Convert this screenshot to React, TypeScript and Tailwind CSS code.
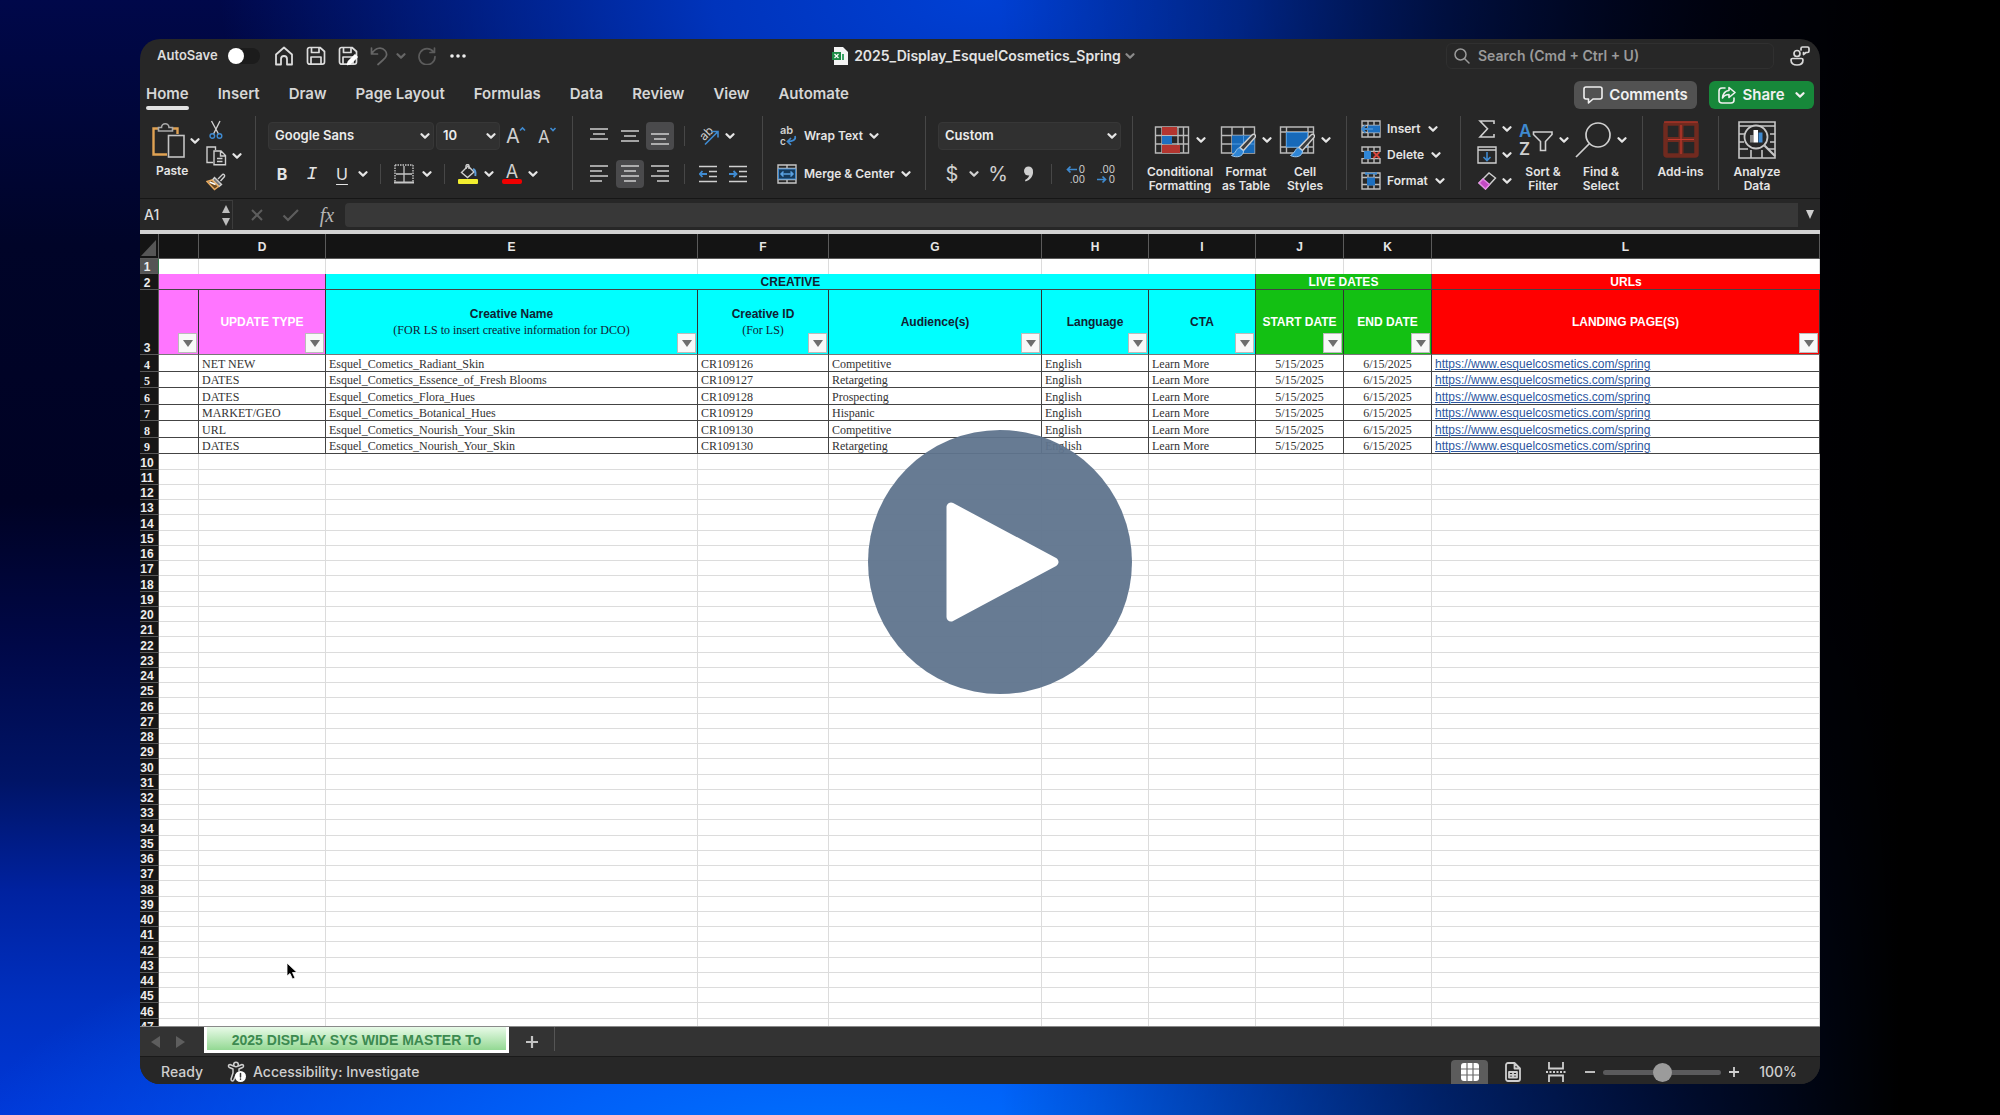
import type { ReactNode } from "react"

interface creative {
  type: string,
  name: string,
  id: string,
  audience: string,
}

const creatives: creative[] = [
  { type: "NET NEW", name: "Esquel_Cometics_Radiant_Skin", id: "CR109126", audience: "Competitive" },
  { type: "DATES", name: "Esquel_Cometics_Essence_of_Fresh Blooms", id: "CR109127", audience: "Retargeting" },
  { type: "DATES", name: "Esquel_Cometics_Flora_Hues", id: "CR109128", audience: "Prospecting" },
  { type: "MARKET/GEO", name: "Esquel_Cometics_Botanical_Hues", id: "CR109129", audience: "Hispanic" },
  { type: "URL", name: "Esquel_Cometics_Nourish_Your_Skin", id: "CR109130", audience: "Competitive" },
  { type: "DATES", name: "Esquel_Cometics_Nourish_Your_Skin", id: "CR109130", audience: "Retargeting" },
]

const tabs = ["Home", "Insert", "Draw", "Page Layout", "Formulas", "Data", "Review", "View", "Automate"]
const emptyRows = Array.from({ length: 38 }, (_, i) => i + 10)
const letters = ["", "D", "E", "F", "G", "H", "I", "J", "K", "L"]

/* ---------- small pieces ---------- */

function Chev({ className = "" }: { className?: string }) {
  return (
    <svg viewBox="0 0 10 6" className={`w-[10px] h-[6px] shrink-0 ${className}`} fill="none" stroke="currentColor" strokeWidth="2.2" strokeLinecap="round" strokeLinejoin="round">
      <path d="M1.5 1.2 5 4.6 8.5 1.2" />
    </svg>
  )
}

function Btn({ label, className = "", children }: { label: string, className?: string, children: ReactNode }) {
  return (
    <button aria-label={label} className={`flex items-center justify-center shrink-0 ${className}`}>
      {children}
    </button>
  )
}

function Group({ className, children }: { className: string, children: ReactNode }) {
  return <div className={`h-[74px] shrink-0 border-r border-[#474747] ${className}`}>{children}</div>
}

function Split({ className = "" }: { className?: string }) {
  return <span className={`w-px h-5 shrink-0 bg-[#474747] ${className}`} />
}

function Lines({ rows }: { rows: number[][] }) {
  return (
    <svg viewBox="0 0 18 18" className="w-[18px] h-[18px]" stroke="#cfcfcf" strokeWidth="1.6">
      {rows.map(([y, a, b]) => <path key={y} d={`M${a} ${y}H${b}`} />)}
    </svg>
  )
}

function Picker({ label, value, className }: { label: string, value: string, className: string }) {
  return (
    <label className={`relative h-7 shrink-0 ${className}`}>
      <select aria-label={label} className="appearance-none w-full h-7 px-[6px] rounded bg-[#303030] border border-[#373737] text-[13px] font-semibold text-[#ececec]">
        <option>{value}</option>
      </select>
      <Chev className="absolute right-1 top-[11px]" />
    </label>
  )
}

/* ---------- icons ---------- */

const stroke = { fill: "none", stroke: "currentColor", strokeLinecap: "round", strokeLinejoin: "round" } as const

function SaveIcon({ pen = false }: { pen?: boolean }) {
  return (
    <svg viewBox="0 0 20 20" className="w-5 h-5" {...stroke} strokeWidth="1.7">
      <path d="M3.5 1.5H14L18.5 5.5V16A2.2 2.2 0 0 1 16.3 18.2H3.7A2.2 2.2 0 0 1 1.5 16V3.5A2 2 0 0 1 3.5 1.5Z" />
      <path d="M5.5 1.8V6.5H13V1.8M5 18V11H15V18" />
      {pen && <path d="M9.5 18.5 10.5 15.5 17 9 19 11 12.5 17.5Z" fill="#fff" stroke="#fff" />}
    </svg>
  )
}

function PasteIcon() {
  return (
    <svg viewBox="0 0 34 37" className="w-[34px] h-[37px]" fill="none" strokeWidth="1.6">
      <path d="M7 6.5H1.5V32.5H15M20 6.5H25.5V12" stroke="#e0a253" strokeWidth="2.4" />
      <path d="M6.5 9V5.500H9.500A3.600 3.600 0 0 1 17 5.500H20.500V9Z" stroke="#a9a9a9" />
      <rect x="16.5" y="13.5" width="15.5" height="21.5" fill="#272727" stroke="#c4c4c4" />
    </svg>
  )
}

function CutIcon() {
  return (
    <svg viewBox="0 0 14 20" className="w-[14px] h-5" fill="none" strokeWidth="1.4">
      <path d="M2.5 1 9.5 14M11 1 4.5 14" stroke="#cfcfcf" />
      <circle cx="3.3" cy="16" r="2.3" stroke="#3f8ad0" />
      <circle cx="10.5" cy="16" r="2.3" stroke="#3f8ad0" />
    </svg>
  )
}

function CopyIcon() {
  return (
    <svg viewBox="0 0 21 20" className="w-[21px] h-5" fill="none" stroke="#cfcfcf" strokeWidth="1.4">
      <path d="M7 16.5H1V1H9.5V4" />
      <path d="M8 5H15L19.5 9.5V18.8H8ZM14.5 5V10H19.5M11 12.5H16.5M11 15.5H16.5" />
    </svg>
  )
}

function BrushIcon() {
  return (
    <svg viewBox="0 0 20 19" className="w-5 h-[19px]" fill="none" strokeWidth="1.4">
      <path d="M12 7 16.5 2.5A1.5 1.5 0 0 1 18.5 4.5L14.5 9" stroke="#cfcfcf" />
      <path d="M8.5 5.5 15.5 12.5 13 14.5 6.5 8Z" fill="#777" stroke="#cfcfcf" />
      <path d="M6 8 1 9.5 8.5 17.5 12.5 14.5Z" fill="#6b4a22" stroke="#e8ab60" />
      <path d="M3.5 10 9.5 12.5" stroke="#fff" />
    </svg>
  )
}

function BordersIcon() {
  return (
    <svg viewBox="0 0 20 20" className="w-5 h-5" fill="none" stroke="#c6c6c6">
      <path d="M1 1H19M1 1V18M19 1V18" strokeWidth="1.4" strokeDasharray="1.5 1" />
      <path d="M10 2V18M2 10H18" strokeWidth="1.3" />
      <path d="M0 18.5H20" strokeWidth="2" />
    </svg>
  )
}

function FillIcon() {
  return (
    <svg viewBox="0 0 20 20" className="w-5 h-5" fill="none" strokeWidth="1.4">
      <path d="M3.5 8.5 10 2 16 8 9.5 13.5Z" stroke="#cfcfcf" />
      <path d="M8 5V2A1.5 1.5 0 0 1 11 2V5" stroke="#cfcfcf" />
      <path d="M15 5C17.5 6 17.8 9 17.3 12" stroke="#5b9bd5" strokeWidth="2" />
      <rect x="0" y="15" width="20" height="5" rx="1" fill="#f2ee2f" />
    </svg>
  )
}

function OrientIcon() {
  return (
    <svg viewBox="0 0 20 20" className="w-5 h-5 overflow-visible" fill="none">
      <text x="1" y="13" fontSize="12" fill="#cfcfcf" fontFamily="Inter, sans-serif" transform="rotate(-45 6 9)">ab</text>
      <path d="M6 18.5 18.5 6M13 5.5H19V11.5" stroke="#3f8ad0" strokeWidth="1.6" />
    </svg>
  )
}

function IndentIcon({ right = false }: { right?: boolean }) {
  return (
    <svg viewBox="0 0 18 18" className="w-[18px] h-[18px]" fill="none">
      <path d="M0 1.5H18M10 6.5H18M10 11.5H18M0 16.5H18" stroke="#cfcfcf" strokeWidth="1.6" />
      {right
        ? <path d="M0 9H7M4.5 6 7.5 9 4.5 12" stroke="#3f8ad0" strokeWidth="1.8" />
        : <path d="M8 9H1M3.5 6 .8 9 3.5 12" stroke="#3f8ad0" strokeWidth="1.8" />}
    </svg>
  )
}

function WrapIcon() {
  return (
    <svg viewBox="0 0 18 20" className="w-[18px] h-5 overflow-visible" fill="none">
      <text x="1" y="8" fontSize="11" fill="#cfcfcf" fontFamily="Inter, sans-serif">ab</text>
      <text x="1" y="19" fontSize="10" fill="#cfcfcf" fontFamily="Inter, sans-serif">c</text>
      <path d="M16 10C17.5 14 13 15.5 9 15.5M12 12 8.5 15.5 12 18.8" stroke="#3f8ad0" strokeWidth="1.7" />
    </svg>
  )
}

function MergeIcon() {
  return (
    <svg viewBox="0 0 20 20" className="w-5 h-5" fill="none">
      <path d="M1 1H19V19H1ZM1 4.5H19M1 15.5H19M10 1V4.5M10 15.5V19" stroke="#c6c6c6" strokeWidth="1.4" />
      <rect x="1.5" y="5" width="17" height="10" fill="#16395a" stroke="#3f8ad0" />
      <path d="M4 10H16M6.5 7.5 4 10 6.5 12.5M13.5 7.5 16 10 13.5 12.5" stroke="#5aa0e0" strokeWidth="1.5" />
    </svg>
  )
}

function DecimalIcon({ top, bottom, right = false }: { top: string, bottom: string, right?: boolean }) {
  return (
    <svg viewBox="0 0 20 20" className="w-5 h-5 overflow-visible" fill="none">
      <text x="19" y="9" fontSize="10" textAnchor="end" fill="#cfcfcf" fontFamily="Inter, sans-serif">{top}</text>
      <text x="19" y="19" fontSize="10" textAnchor="end" fill="#cfcfcf" fontFamily="Inter, sans-serif">{bottom}</text>
      {right
        ? <path d="M1 15.5H9M6.5 12.5 9.5 15.5 6.5 18.5" stroke="#3f8ad0" strokeWidth="1.7" />
        : <path d="M11 5.500H2M4.500 2.500 1.500 5.500 4.500 8.500" stroke="#3f8ad0" strokeWidth="1.7" />}
    </svg>
  )
}

function ConditionalIcon() {
  return (
    <svg viewBox="0 0 36 36" className="w-9 h-9" fill="none">
      <path d="M1.5 5H34.5V31H1.5ZM1.5 13.5H34.5M1.5 22H34.5M8 5V31M24 5V31M29.5 5V31" stroke="#b9b9b9" strokeWidth="1.4" />
      <rect x="8" y="5" width="15" height="8" fill="#b3352f" />
      <rect x="8" y="14" width="10" height="8" fill="#1d6fbf" />
      <rect x="8" y="23" width="18" height="8" fill="#b3352f" />
    </svg>
  )
}

function BrushOver() {
  return (
    <>
      <path d="M34.5 12.5C36 13.5 35.5 15 34.5 16L23.5 28.5 20 25.5 31.5 13.5C32.5 12.5 33.5 12 34.5 12.5Z" fill="#3c3c3c" stroke="#d0d0d0" strokeWidth="1.4" />
      <path d="M19.5 26C16 26 16.5 31 11.5 33.5 16 36 23.5 35 23.5 29Z" fill="#2f86d6" stroke="#9cc8ef" />
    </>
  )
}

function TableFormatIcon() {
  return (
    <svg viewBox="0 0 36 36" className="w-9 h-9" fill="none">
      <path d="M1.5 5H34.5V31H1.5ZM1.5 13.5H34.5M1.5 22H34.5M12 5V31M23.5 5V31" stroke="#b9b9b9" strokeWidth="1.4" />
      <path d="M12 13.5H34.5V31H12Z" fill="#1769b8" />
      <path d="M12 22H34.5M23.5 13.5V31" stroke="#4f9be0" />
      <BrushOver />
    </svg>
  )
}

function CellStylesIcon() {
  return (
    <svg viewBox="0 0 36 36" className="w-9 h-9" fill="none">
      <path d="M1.5 5H34.5V31H1.5ZM1.5 10H34.5M1.5 25H34.5M7.5 5V31M29 5V31" stroke="#b9b9b9" strokeWidth="1.4" />
      <path d="M7.5 10.5H28.5V25H7.5Z" fill="#1769b8" stroke="#4f9be0" />
      <BrushOver />
    </svg>
  )
}

function CellsIcon({ kind }: { kind: string }) {
  return (
    <svg viewBox="0 0 20 18" className="w-5 h-[18px]" fill="none">
      <path d="M1 1H19V17H1ZM1 5.5H19M1 12.5H19M7 1V17M13 1V17" stroke="#bdbdbd" strokeWidth="1.4" />
      {kind === "Insert" && <>
        <rect x="7" y="5.5" width="12" height="7" fill="#1d6fbf" />
        <path d="M12 9H1M4.5 5.5 1 9 4.5 12.5" stroke="#3f8ad0" strokeWidth="1.8" />
      </>}
      {kind === "Delete" && <>
        <rect x="0" y="6" width="20" height="6" fill="#272727" />
        <rect x="3" y="5" width="7" height="8" rx="1" fill="#2f86d6" />
        <path d="M12.5 6 18.5 12M18.5 6 12.5 12" stroke="#d9463c" strokeWidth="1.8" />
      </>}
      {kind === "Format" && <>
        <rect x="6" y="5.5" width="8" height="8" fill="#1d6fbf" />
        <path d="M5 1.5H15M5 0V3M15 0V3" stroke="#3f8ad0" strokeWidth="1.5" />
      </>}
    </svg>
  )
}

function PeopleIcon() {
  return (
    <svg viewBox="0 0 20 20" className="w-5 h-5" {...stroke} strokeWidth="1.7">
      <circle cx="7" cy="7.5" r="3" />
      <path d="M2.500 12.500H11.500A1.500 1.500 0 0 1 13 14C13 17.500 10.500 19 7 19S1 17.500 1 14A1.500 1.500 0 0 1 2.500 12.500Z" />
      <path d="M11 4V2.500A1.500 1.500 0 0 1 12.500 1H17.500A1.500 1.500 0 0 1 19 2.500V5A1.500 1.500 0 0 1 17.500 6.500H16L13.500 8.500V6.500" />
    </svg>
  )
}

function AnalyzeIcon() {
  return (
    <svg viewBox="0 0 38 38" className="w-[38px] h-[38px]" fill="none" stroke="#c6c6c6">
      <path d="M1 1H37V37H1ZM1 5H37M1 13H7M1 21H6M1 28H10M13 29V37M24 29V37M30 28H37M32 13H37M32 21H37" strokeWidth="1.6" />
      <circle cx="18" cy="16" r="11.5" fill="#272727" strokeWidth="1.8" />
      <path d="M26.5 24.5 37 35" strokeWidth="2.2" />
      <path d="M12 14H15.5V21.5H12Z" fill="#888" stroke="none" />
      <path d="M15.5 9H20V21.5H15.5Z" fill="#fff" stroke="none" />
      <path d="M20.5 11.5H24.5V21.5H20.5Z" fill="#3f8ad0" stroke="none" />
    </svg>
  )
}

/* ---------- ribbon ---------- */

function TitleBar() {
  return (
    <div className="flex items-center h-[33px]">
      <div className="flex-1 flex items-center pl-[17px] text-[#dcdcdc]">
        <label className="flex items-center gap-[10px] text-[13px] font-semibold">
          AutoSave
          <input type="checkbox" className="appearance-none w-8 h-4 rounded-full bg-[#1c1c1c] before:block before:w-4 before:h-4 before:rounded-full before:bg-white" />
        </label>
        <Btn label="Home" className="ml-[14px]">
          <svg viewBox="0 0 20 20" className="w-5 h-5" {...stroke} strokeWidth="1.8"><path d="M2 8.5 10 1.5 18 8.5V18.5H13V13A3 3 0 0 0 7 13V18.5H2Z" /></svg>
        </Btn>
        <Btn label="Save" className="ml-3"><SaveIcon /></Btn>
        <Btn label="Save As" className="ml-3"><SaveIcon pen /></Btn>
        <Btn label="Undo" className="ml-3 text-[#666]">
          <svg viewBox="0 0 18 20" className="w-[18px] h-5" {...stroke} strokeWidth="1.7"><path d="M1.5 2V8H7.5M1.8 7.5C6 1 12 1 15 4.5S16.5 11 13 14L8 18.5" /></svg>
        </Btn>
        <Chev className="ml-2 text-[#666]" />
        <Btn label="Redo" className="ml-3 text-[#5c5c5c]">
          <svg viewBox="0 0 18 18" className="w-[18px] h-[18px]" {...stroke} strokeWidth="1.7"><path d="M15.5 5A8 8 0 1 0 17 9.5M16.5 1V5.5H12" /></svg>
        </Btn>
        <Btn label="More" className="ml-[13px]">
          <svg viewBox="0 0 18 4" className="w-[18px] h-1" fill="#eee"><circle cx="3" cy="2" r="1.8" /><circle cx="9" cy="2" r="1.8" /><circle cx="15" cy="2" r="1.8" /></svg>
        </Btn>
      </div>

      <button className="flex items-center text-sm font-semibold text-[#e4e4e4]">
        <svg viewBox="0 0 17 18" className="w-[17px] h-[18px] mr-[5px]">
          <path d="M2 0H11L16 5V18H2Z" fill="#f4f4f4" />
          <rect x="0" y="5" width="9" height="8" fill="#1c8a45" />
          <path d="M2.5 7 6.5 11M6.5 7 2.5 11" stroke="#fff" strokeWidth="1.2" />
          <path d="M11 7V13" stroke="#3ba266" strokeWidth="2" />
        </svg>
        2025_Display_EsquelCosmetics_Spring
        <Chev className="ml-1 text-[#8a8a8a]" />
      </button>

      <div className="flex-1 flex items-center justify-end pr-[10px]">
        <label className="flex items-center w-[328px] h-[26px] rounded-md border border-[#303030] pl-[7px]">
          <svg viewBox="0 0 16 16" className="w-4 h-4 text-[#9a9a9a]" {...stroke} strokeWidth="1.5"><circle cx="6.5" cy="6.5" r="5.5" /><path d="M10.5 10.5 15 15" /></svg>
          <input aria-label="Search" placeholder="Search (Cmd + Ctrl + U)" className="flex-1 ml-2 bg-transparent text-sm font-semibold outline-none placeholder:text-[#9a9a9a]" />
        </label>
        <Btn label="Account" className="ml-4 text-[#d8d8d8]"><PeopleIcon /></Btn>
      </div>
    </div>
  )
}

function TabRow() {
  return (
    <div className="flex justify-between h-10 px-[6px] text-[15px] leading-5 font-semibold">
      <nav className="flex gap-[29px] pt-3">
        {tabs.map((t) => (
          <button key={t} className="flex flex-col whitespace-nowrap text-[#d6d6d6]">
            {t}
            {t === "Home" && <span className="mt-[2px] w-full h-1 rounded-full bg-[#e2e2e2]" />}
          </button>
        ))}
      </nav>
      <div className="flex gap-3 pt-[9px] text-[#f0f0f0]">
        <button className="flex items-center justify-center gap-[6px] w-[123px] h-7 rounded-md bg-[#525252]">
          <svg viewBox="0 0 20 18" className="w-5 h-[18px]" {...stroke} strokeWidth="1.6"><path d="M3 1H17A2 2 0 0 1 19 3V11A2 2 0 0 1 17 13H10L5.5 17V13H3A2 2 0 0 1 1 11V3A2 2 0 0 1 3 1Z" /></svg>
          Comments
        </button>
        <button className="flex items-center justify-center gap-[6px] w-[105px] h-7 rounded-md bg-[#17883a]">
          <svg viewBox="0 0 18 18" className="w-[18px] h-[18px]" {...stroke} strokeWidth="1.6"><path d="M7 2H4A3 3 0 0 0 1 5V14A3 3 0 0 0 4 17H13A3 3 0 0 0 16 14V12M11 1.5 17 6.5 11 11.5V8.5C8 8.5 6 9.5 4.5 12 5 7.5 7 4.8 11 4.5Z" /></svg>
          Share
          <Chev className="ml-1" />
        </button>
      </div>
    </div>
  )
}

function BigButton({ lines, icon, className = "", chev = true }: { lines: string[], icon: ReactNode, className?: string, chev?: boolean }) {
  return (
    <button className={`flex flex-col items-center shrink-0 text-xs leading-[14px] font-semibold text-[#e4e4e4] ${className}`}>
      <span className="flex items-center gap-[6px] h-[43px] mb-1">
        {icon}
        {chev && <Chev />}
      </span>
      {lines.map((l) => <span key={l} className="whitespace-nowrap">{l}</span>)}
    </button>
  )
}

function Ribbon() {
  return (
    <div className="flex h-[87px] pt-1 border-b border-[#161616] overflow-hidden text-[#e4e4e4]">
      <Group className="w-[116px] flex items-start pl-2">
        <button className="flex flex-col items-start w-[54px] pt-[6px] pl-1 text-xs leading-[14px] font-semibold">
          <span className="flex items-center gap-1 mb-[5px]"><PasteIcon /><Chev /></span>
          <span className="ml-1">Paste</span>
        </button>
        <div className="flex flex-col pl-1 pt-1 gap-[6px]">
          <Btn label="Cut" className="w-5"><CutIcon /></Btn>
          <div className="flex items-center gap-[5px]"><Btn label="Copy"><CopyIcon /></Btn><Chev /></div>
          <Btn label="Format Painter" className="w-5"><BrushIcon /></Btn>
        </div>
      </Group>

      <Group className="w-[317px] flex flex-col gap-[10px] pl-3 pt-[6px]">
        <div className="flex items-center">
          <Picker label="Font" value="Google Sans" className="w-[166px]" />
          <Picker label="Font size" value="10" className="w-16 ml-[2px]" />
          <Btn label="Increase Font Size" className="ml-[6px]">
            <svg viewBox="0 0 20 20" className="w-5 h-5 overflow-visible"><text x="0" y="17" fontSize="20" fill="#cfcfcf" fontFamily="Inter, sans-serif">A</text><path d="M14 4.5 16.5 2 19 4.5" fill="none" stroke="#3f8ad0" strokeWidth="1.6" /></svg>
          </Btn>
          <Btn label="Decrease Font Size" className="ml-3">
            <svg viewBox="0 0 18 20" className="w-[18px] h-5 overflow-visible"><text x="0" y="17" fontSize="17" fill="#cfcfcf" fontFamily="Inter, sans-serif">A</text><path d="M12.5 2 15 4.5 17.5 2" fill="none" stroke="#3f8ad0" strokeWidth="1.6" /></svg>
          </Btn>
        </div>
        <div className="flex items-center h-7">
          <Btn label="Bold" className="w-7 h-7 text-base font-bold">B</Btn>
          <Btn label="Italic" className="w-7 h-7 ml-[2px] font-['Liberation_Mono'] text-lg italic">I</Btn>
          <Btn label="Underline" className="w-7 h-7 ml-[2px] text-base underline underline-offset-4">U</Btn>
          <Chev className="ml-[2px]" />
          <Split className="ml-3" />
          <Btn label="Borders" className="ml-[13px]"><BordersIcon /></Btn>
          <Chev className="ml-2" />
          <Split className="ml-3" />
          <Btn label="Fill Color" className="ml-[13px]"><FillIcon /></Btn>
          <Chev className="ml-[6px]" />
          <Btn label="Font Color" className="ml-2">
            <svg viewBox="0 0 20 20" className="w-5 h-5 overflow-visible"><text x="10" y="14" fontSize="18" textAnchor="middle" fill="#cfcfcf" fontFamily="Inter, sans-serif">A</text><rect x="0" y="15" width="20" height="5" rx="2" fill="#f00000" /></svg>
          </Btn>
          <Chev className="ml-[6px]" />
        </div>
      </Group>

      <Group className="w-[190px] flex flex-col gap-[10px] pl-3 pt-[6px]">
        <div className="flex items-center gap-[2px]">
          <Btn label="Top Align" className="w-7 h-7"><Lines rows={[[2, 0, 18], [7, 3, 15], [12, 0, 18]]} /></Btn>
          <Btn label="Middle Align" className="w-7 h-7 ml-px"><Lines rows={[[4, 0, 18], [9, 3, 15], [14, 0, 18]]} /></Btn>
          <Btn label="Bottom Align" className="w-7 h-7 rounded bg-[#4a4a4c]"><Lines rows={[[7, 0, 18], [12, 3, 15], [17, 0, 18]]} /></Btn>
          <Split className="ml-2" />
          <Btn label="Orientation" className="ml-3"><OrientIcon /></Btn>
          <Chev className="ml-1" />
        </div>
        <div className="flex items-center gap-[2px]">
          <Btn label="Align Left" className="w-7 h-7"><Lines rows={[[1, 0, 18], [6, 0, 12], [11, 0, 18], [16, 0, 12]]} /></Btn>
          <Btn label="Center" className="w-7 h-7 ml-px rounded bg-[#4a4a4c]"><Lines rows={[[1, 0, 18], [6, 3, 15], [11, 0, 18], [16, 3, 15]]} /></Btn>
          <Btn label="Align Right" className="w-7 h-7"><Lines rows={[[1, 0, 18], [6, 6, 18], [11, 0, 18], [16, 6, 18]]} /></Btn>
          <Split className="ml-2" />
          <Btn label="Decrease Indent" className="ml-3"><IndentIcon /></Btn>
          <Btn label="Increase Indent" className="ml-[10px]"><IndentIcon right /></Btn>
        </div>
      </Group>

      <Group className="w-[163px] flex flex-col gap-[10px] pl-[14px] pt-[6px] text-xs font-semibold">
        <button className="flex items-center h-7 pl-[2px]"><WrapIcon /><span className="ml-[7px]">Wrap Text</span><Chev className="ml-[6px]" /></button>
        <button className="flex items-center h-7"><MergeIcon /><span className="ml-[7px] whitespace-nowrap">Merge &amp; Center</span><Chev className="ml-[6px]" /></button>
      </Group>

      <Group className="w-[207px] flex flex-col gap-[10px] pl-3 pt-[6px]">
        <Picker label="Number Format" value="Custom" className="w-[183px]" />
        <div className="flex items-center h-7 text-xl text-[#d0d0d0]">
          <Btn label="Currency" className="w-7">$</Btn>
          <Chev className="ml-[3px]" />
          <Btn label="Percent" className="w-7 ml-[5px]">%</Btn>
          <Btn label="Comma Style" className="w-7 ml-[3px]">
            <svg viewBox="0 0 12 16" className="w-3 h-4"><circle cx="5.5" cy="5" r="4.5" fill="#d0d0d0" /><path d="M10 5C10.5 10 7.5 14 2.5 15.5L2 14C5 12.5 6.5 10 6.5 8Z" fill="#d0d0d0" /></svg>
          </Btn>
          <Split className="ml-2" />
          <Btn label="Increase Decimal" className="ml-[14px]"><DecimalIcon top="0" bottom=".00" /></Btn>
          <Btn label="Decrease Decimal" className="ml-[10px]"><DecimalIcon top=".00" bottom="0" right /></Btn>
        </div>
      </Group>

      <Group className="w-[214px] flex items-start pl-3 pt-[2px]">
        <BigButton className="w-[70px]" lines={["Conditional", "Formatting"]} icon={<ConditionalIcon />} />
        <BigButton className="w-[62px]" lines={["Format", "as Table"]} icon={<TableFormatIcon />} />
        <BigButton className="w-[56px]" lines={["Cell", "Styles"]} icon={<CellStylesIcon />} />
      </Group>

      <Group className="w-[114px] flex flex-col gap-2 pl-[14px] pt-1 text-xs font-semibold">
        {["Insert", "Delete", "Format"].map((k) => (
          <button key={k} className="flex items-center h-[18px]"><CellsIcon kind={k} /><span className="ml-[6px]">{k}</span><Chev className="ml-[7px]" /></button>
        ))}
      </Group>

      <Group className="w-[182px] flex items-start pl-4">
        <div className="flex flex-col gap-2 pt-1">
          <button aria-label="AutoSum" className="flex items-center gap-[5px] h-[18px]">
            <svg viewBox="0 0 20 18" className="w-5 h-[18px]" fill="none" stroke="#cfcfcf" strokeWidth="1.6"><path d="M17 4V1H3L10.5 8.8 3 17H17V14" /></svg><Chev />
          </button>
          <button aria-label="Fill" className="flex items-center gap-[5px] h-[18px]">
            <svg viewBox="0 0 20 18" className="w-5 h-[18px]" fill="none" stroke="#cfcfcf" strokeWidth="1.4"><path d="M1 1H19V17H1ZM1 4H19" /><path d="M10 6V14.5M6.5 11 10 14.5 13.5 11" stroke="#3f8ad0" strokeWidth="1.6" /></svg><Chev />
          </button>
          <button aria-label="Clear" className="flex items-center gap-[5px] h-[18px]">
            <svg viewBox="0 0 20 18" className="w-5 h-[18px]" fill="none" stroke="#cfcfcf" strokeWidth="1.4"><path d="M2 11 12 1 18.5 6 8.5 17Z" /><path d="M2 11 6 7 12.5 12.5 8.5 17Z" fill="#c449c4" stroke="#e48be4" /></svg><Chev />
          </button>
        </div>
        <BigButton className="w-[58px] pt-[2px] ml-[2px]" lines={["Sort &", "Filter"]} icon={
          <svg viewBox="0 0 36 36" className="w-9 h-9 overflow-visible" fill="none">
            <text x="2" y="15" fontSize="17" fill="#3f8ad0" fontFamily="Inter, sans-serif">A</text>
            <text x="2" y="33" fontSize="17" fill="#cfcfcf" fontFamily="Inter, sans-serif">Z</text>
            <path d="M16.5 10H35V12.5L28.5 19.5V28.5H23.5V19.5L16.5 12.5Z" stroke="#cfcfcf" strokeWidth="1.6" />
          </svg>
        } />
        <BigButton className="w-[58px] pt-[2px]" lines={["Find &", "Select"]} icon={
          <svg viewBox="0 0 36 36" className="w-9 h-9" fill="none" stroke="#cfcfcf" strokeWidth="1.7"><circle cx="23" cy="13" r="12" /><path d="M14.5 21.5 1 35" /></svg>
        } />
      </Group>

      <Group className="w-[76px] flex items-start justify-center pt-[2px]">
        <BigButton chev={false} lines={["Add-ins"]} icon={
          <svg viewBox="0 0 36 37" className="w-9 h-[37px]" fill="none">
            <rect x="2.5" y="2.5" width="31" height="32" rx="1.5" stroke="#702a1f" strokeWidth="4.5" />
            <path d="M18 2V35M2 18.5H34" stroke="#702a1f" strokeWidth="5" />
            <path d="M1 1H35M5 18.5H31M18 4V33" stroke="#c4382c" strokeWidth="1.2" />
          </svg>
        } />
      </Group>

      <div className="flex items-start pl-4 pt-[2px]">
        <BigButton className="w-11" chev={false} lines={["Analyze", "Data"]} icon={<AnalyzeIcon />} />
      </div>
    </div>
  )
}

function FormulaBar() {
  return (
    <div className="flex items-center h-[31px] bg-[#272727]">
      <input aria-label="Name Box" defaultValue="A1" className="w-20 h-full pl-1 bg-transparent text-sm font-medium text-[#dcdcdc] outline-none" />
      <span className="flex flex-col gap-[5px] items-center w-[13px] h-[29px] pt-1 border-r border-t border-[#3c3c3c] text-[#bdbdbd]">
        <svg viewBox="0 0 8 8" className="w-2 h-2" fill="currentColor"><path d="M4 0 8 8H0Z" /></svg>
        <svg viewBox="0 0 8 8" className="w-2 h-2" fill="currentColor"><path d="M4 8 8 0H0Z" /></svg>
      </span>
      <Btn label="Cancel" className="ml-[17px] text-[#5d5d5d]"><svg viewBox="0 0 14 14" className="w-[14px] h-[14px]" fill="none" stroke="currentColor" strokeWidth="2"><path d="M2 2 12 12M12 2 2 12" /></svg></Btn>
      <Btn label="Enter" className="ml-[18px] text-[#5d5d5d]"><svg viewBox="0 0 18 14" className="w-[18px] h-[14px]" fill="none" stroke="currentColor" strokeWidth="2.2"><path d="M1.5 7.5 6 12 16 2" /></svg></Btn>
      <Btn label="Insert Function" className="ml-[17px] w-5 h-[26px] font-['Liberation_Serif'] italic text-xl text-[#b5b5b5]">fx</Btn>
      <input aria-label="Formula Bar" className="flex-1 ml-2 h-6 rounded-l bg-[#383838] outline-none" />
      <Btn label="Expand" className="w-[22px] h-5 pl-px text-[#cfcfcf]"><svg viewBox="0 0 10 9" className="w-[10px] h-[9px]" fill="currentColor"><path d="M1 0H9L5 9Z" /></svg></Btn>
    </div>
  )
}

/* ---------- sheet ---------- */

function RowHead({ n, className = "bg-[#161616]" }: { n: number, className?: string }) {
  return (
    <th className={`p-0 align-bottom border-b border-r border-[#5a5a5a] text-xs leading-3 font-bold text-[#ededed] ${className}`}>
      <span className="flex justify-center -ml-2 -mr-1">{n}</span>
    </th>
  )
}

function FilterHead({ title, note, className }: { title: string, note?: string, className: string }) {
  return (
    <th className={`relative border-b border-r border-b-[#777] border-r-[#333] text-xs leading-4 font-bold ${className}`}>
      {title}
      {note && <span className="block font-normal font-['Liberation_Serif']">{note}</span>}
      <button aria-label={`Filter ${title}`} className="absolute right-px bottom-px flex items-center justify-center w-[19px] h-5 bg-[#f8f8f8] border border-[#bbb]">
        <svg viewBox="0 0 10 7" className="w-[10px] h-[7px]" fill="#6d6d6d"><path d="M0 0H10L5 7Z" /></svg>
      </button>
    </th>
  )
}

function Sheet() {
  const cell = "border-b border-r border-[#444] px-[3px] whitespace-nowrap"
  const blank = "border-b border-r border-[#dcdcdc]"
  return (
    <div className="flex-1 min-h-0 overflow-hidden bg-white">
      <table className="w-full table-fixed border-separate border-spacing-0 font-['Liberation_Sans'] text-[#333]">
        <colgroup>
          <col className="w-[19px]" />
          <col className="w-10" />
          <col className="w-[127px]" />
          <col className="w-[372px]" />
          <col className="w-[131px]" />
          <col className="w-[213px]" />
          <col className="w-[107px]" />
          <col className="w-[107px]" />
          <col className="w-[88px]" />
          <col className="w-[88px]" />
          <col />
        </colgroup>
        <thead>
          <tr className="h-[25px] bg-[#141414] text-[#e6e6e6] text-xs leading-4">
            <th className="border-b border-r border-[#5a5a5a] p-0">
              <svg viewBox="0 0 18 24" className="w-[18px] h-6"><path d="M16 6V22H1Z" fill="#565656" /></svg>
            </th>
            {letters.map((l, i) => <th key={i} className="border-b border-r border-[#5a5a5a] font-bold p-0 pt-px">{l}</th>)}
          </tr>
        </thead>
        <tbody>
          <tr className="h-[15px]">
            <RowHead n={1} className="bg-[#555] border-r-[#2f7d4a]" />
            {letters.map((_, i) => <td key={i} className="border-r border-[#dcdcdc] p-0" />)}
          </tr>
          <tr className="h-4 text-xs leading-[14px] font-bold">
            <RowHead n={2} />
            <td colSpan={2} className="bg-[#ff75ff] border-b border-r border-[#444] p-0" />
            <td colSpan={5} className="bg-[#00ffff] border-b border-r border-[#444] p-0 pt-px text-center text-[#123]">CREATIVE</td>
            <td colSpan={2} className="bg-[#13c013] border-b border-r border-[#444] p-0 pt-px text-center text-white">LIVE DATES</td>
            <td className="bg-[#ff0000] border-b border-[#444] p-0 pt-px text-center text-white">URLs</td>
          </tr>
          <tr className="h-[65px]">
            <RowHead n={3} />
            <FilterHead title="" className="bg-[#ff75ff]" />
            <FilterHead title="UPDATE TYPE" className="bg-[#ff75ff] text-white" />
            <FilterHead title="Creative Name" note="(FOR LS to insert creative information for DCO)" className="bg-[#00ffff] text-[#123]" />
            <FilterHead title="Creative ID" note="(For LS)" className="bg-[#00ffff] text-[#123]" />
            <FilterHead title="Audience(s)" className="bg-[#00ffff] text-[#123]" />
            <FilterHead title="Language" className="bg-[#00ffff] text-[#123]" />
            <FilterHead title="CTA" className="bg-[#00ffff] text-[#123]" />
            <FilterHead title="START DATE" className="bg-[#13c013] text-white" />
            <FilterHead title="END DATE" className="bg-[#13c013] text-white" />
            <FilterHead title="LANDING PAGE(S)" className="bg-[#ff0000] text-white" />
          </tr>
          {creatives.map((c, i) => (
            <tr key={i} className="h-4 even:h-[17px] font-['Liberation_Serif'] text-xs leading-[14px] [&>td]:py-0 [&>td]:align-bottom">
              <RowHead n={i + 4} />
              <td className={cell} />
              <td className={cell}>{c.type}</td>
              <td className={cell}>{c.name}</td>
              <td className={cell}>{c.id}</td>
              <td className={cell}>{c.audience}</td>
              <td className={cell}>English</td>
              <td className={cell}>Learn More</td>
              <td className={`${cell} text-center`}>5/15/2025</td>
              <td className={`${cell} text-center`}>6/15/2025</td>
              <td className={`${cell} font-['Liberation_Sans']`}>
                <a href="https://www.esquelcosmetics.com/spring" className="text-[#2c56a0] underline">https://www.esquelcosmetics.com/spring</a>
              </td>
            </tr>
          ))}
          {emptyRows.map((n) => (
            <tr key={n} className={n % 4 === 2 ? "h-4" : "h-[15px]"}>
              <RowHead n={n} />
              {letters.map((_, i) => <td key={i} className={`${blank} p-0`} />)}
            </tr>
          ))}
        </tbody>
      </table>
    </div>
  )
}

function SheetTabs() {
  return (
    <div className="flex items-start h-[31px] bg-[#333] border-t border-[#8a8a8a] border-b border-b-[#1a1a1a]">
      <Btn label="Previous sheet" className="ml-[5px] w-5 h-[30px] text-[#5e5e5e]"><svg viewBox="0 0 10 12" className="w-[10px] h-3" fill="currentColor"><path d="M10 0V12L1 6Z" /></svg></Btn>
      <Btn label="Next sheet" className="ml-[6px] w-5 h-[30px] text-[#5e5e5e]"><svg viewBox="0 0 10 12" className="w-[10px] h-3" fill="currentColor"><path d="M0 0V12L9 6Z" /></svg></Btn>
      <button className="ml-[13px] w-[305px] h-[26px] pt-[2px] border-[3px] border-t-0 border-white bg-linear-to-b from-[#e8fae8] to-[#93d893] font-['Liberation_Sans'] font-bold text-sm text-[#3c8a50] whitespace-nowrap">2025 DISPLAY SYS WIDE MASTER To</button>
      <Btn label="Add sheet" className="ml-[15px] w-4 h-[30px] text-[#c4c4c4]"><svg viewBox="0 0 14 14" className="w-[14px] h-[14px]" stroke="currentColor" strokeWidth="2.2"><path d="M7 1V13M1 7H13" /></svg></Btn>
      <span className="ml-[14px] w-px h-6 bg-[#555]" />
    </div>
  )
}

function StatusBar() {
  return (
    <div className="flex items-center h-[27px] pt-[3px] pl-[21px] pr-[23px] bg-[#272727] text-sm font-medium text-[#cfcfcf]">
      <span>Ready</span>
      <button className="flex items-center ml-6">
        <svg viewBox="0 0 20 22" className="w-5 h-[22px] mr-[6px]" {...stroke} strokeWidth="1.5">
          <circle cx="9" cy="3.5" r="2.3" />
          <path d="M6.5 5 3 3.5C1 3.5 1 6 2.5 6.5L6 8V12L4 18C4 20.5 6.5 20.5 7 18.5L9 14M11.5 5 15 3.5C17 3.5 17 6 15.5 6.5L12 8V10" />
          <circle cx="13.5" cy="15.5" r="5.5" fill="#fff" stroke="none" />
          <path d="M13.5 12.5V16M13.5 18V18.3" stroke="#333" />
        </svg>
        Accessibility: Investigate
      </button>
      <div className="flex items-center ml-auto">
        <Btn label="Normal view" className="w-[37px] h-6 rounded-t bg-[#5c5c5c]">
          <svg viewBox="0 0 18 18" className="w-[18px] h-[18px]"><rect x="0" y="0" width="18" height="18" rx="3" fill="#fff" /><path d="M6 0V18M12 0V18M0 6H18M0 12H18" stroke="#6a6a6a" strokeWidth="1.2" /></svg>
        </Btn>
        <Btn label="Page Layout view" className="ml-4">
          <svg viewBox="0 0 18 20" className="w-[18px] h-5" {...stroke} strokeWidth="1.8"><path d="M4 1H10.5L16 6.5V17A2 2 0 0 1 14 19H4A2 2 0 0 1 2 17V3A2 2 0 0 1 4 1ZM10.5 1V6.5H16M5 10H13V15.5H5ZM5 12.8H13M9 10V15.5" /></svg>
        </Btn>
        <Btn label="Page Break view" className="ml-6">
          <svg viewBox="0 0 20 20" className="w-5 h-5" fill="none" stroke="currentColor" strokeWidth="1.8"><path d="M3 0V6.5H17V0M3 20V13.5H17V20" /><path d="M0 10H20" strokeDasharray="2 1.5" /></svg>
        </Btn>
        <Btn label="Zoom out" className="ml-[17px] w-[14px]"><svg viewBox="0 0 12 12" className="w-3 h-3" stroke="currentColor" strokeWidth="1.8"><path d="M1 6H11" /></svg></Btn>
        <input aria-label="Zoom" type="range" defaultValue={50} className="mx-[6px] appearance-none w-[118px] h-[5px] rounded-full bg-[#5a5a5c] [&::-webkit-slider-thumb]:appearance-none [&::-webkit-slider-thumb]:w-[19px] [&::-webkit-slider-thumb]:h-[19px] [&::-webkit-slider-thumb]:rounded-full [&::-webkit-slider-thumb]:bg-[#9b9b9b]" />
        <Btn label="Zoom in" className="w-[14px]"><svg viewBox="0 0 12 12" className="w-3 h-3" stroke="currentColor" strokeWidth="1.8"><path d="M6 1V11M1 6H11" /></svg></Btn>
        <span className="ml-[18px]">100%</span>
      </div>
    </div>
  )
}

export default function App() {
  return (
    <div className="relative h-screen min-h-[600px] overflow-hidden pt-[39px] pb-[31px] pl-[7%] pr-[9%] font-['Inter',sans-serif] bg-[linear-gradient(90deg,transparent_50%,rgba(0,0,0,0.55)_72%,#000_95%),radial-gradient(ellipse_44%_26%_at_42%_104%,#0074ff_0%,#0060f8_35%,transparent_100%),radial-gradient(ellipse_38%_30%_at_49%_0%,#0040d4_0%,#0034bc_35%,transparent_100%),linear-gradient(180deg,#00084a_0%,#000428_22%,#000224_45%,#000848_58%,#001466_70%,#0022a0_80%,#0030c0_90%,#0038d8_100%)]">
      <main className="relative flex flex-col h-full rounded-[20px] overflow-hidden bg-[#272727]">
        <TitleBar />
        <TabRow />
        <Ribbon />
        <FormulaBar />
        <div className="h-1 shrink-0 bg-[#d2d2d2]" />
        <Sheet />
        <SheetTabs />
        <StatusBar />

        {/* mouse pointer */}
        <svg viewBox="0 0 12 18" className="absolute left-[146px] top-[923px] w-3 h-[18px]"><path d="M1 1V14L4 11.5 6.5 17 9 16 6.5 10.5H11Z" fill="#000" stroke="#fff" strokeWidth=".8" /></svg>
      </main>

      {/* play overlay */}
      <div className="absolute inset-x-0 top-[39px] bottom-[31px] flex items-center justify-center">
        <button aria-label="Play video" className="w-[264px] h-[264px] rounded-full bg-[#5f748d]/95">
          <svg viewBox="0 0 264 264" className="w-full h-full"><path d="M83 77V187L186 132Z" fill="#fff" stroke="#fff" strokeWidth="9" strokeLinejoin="round" /></svg>
        </button>
      </div>
    </div>
  )
}
